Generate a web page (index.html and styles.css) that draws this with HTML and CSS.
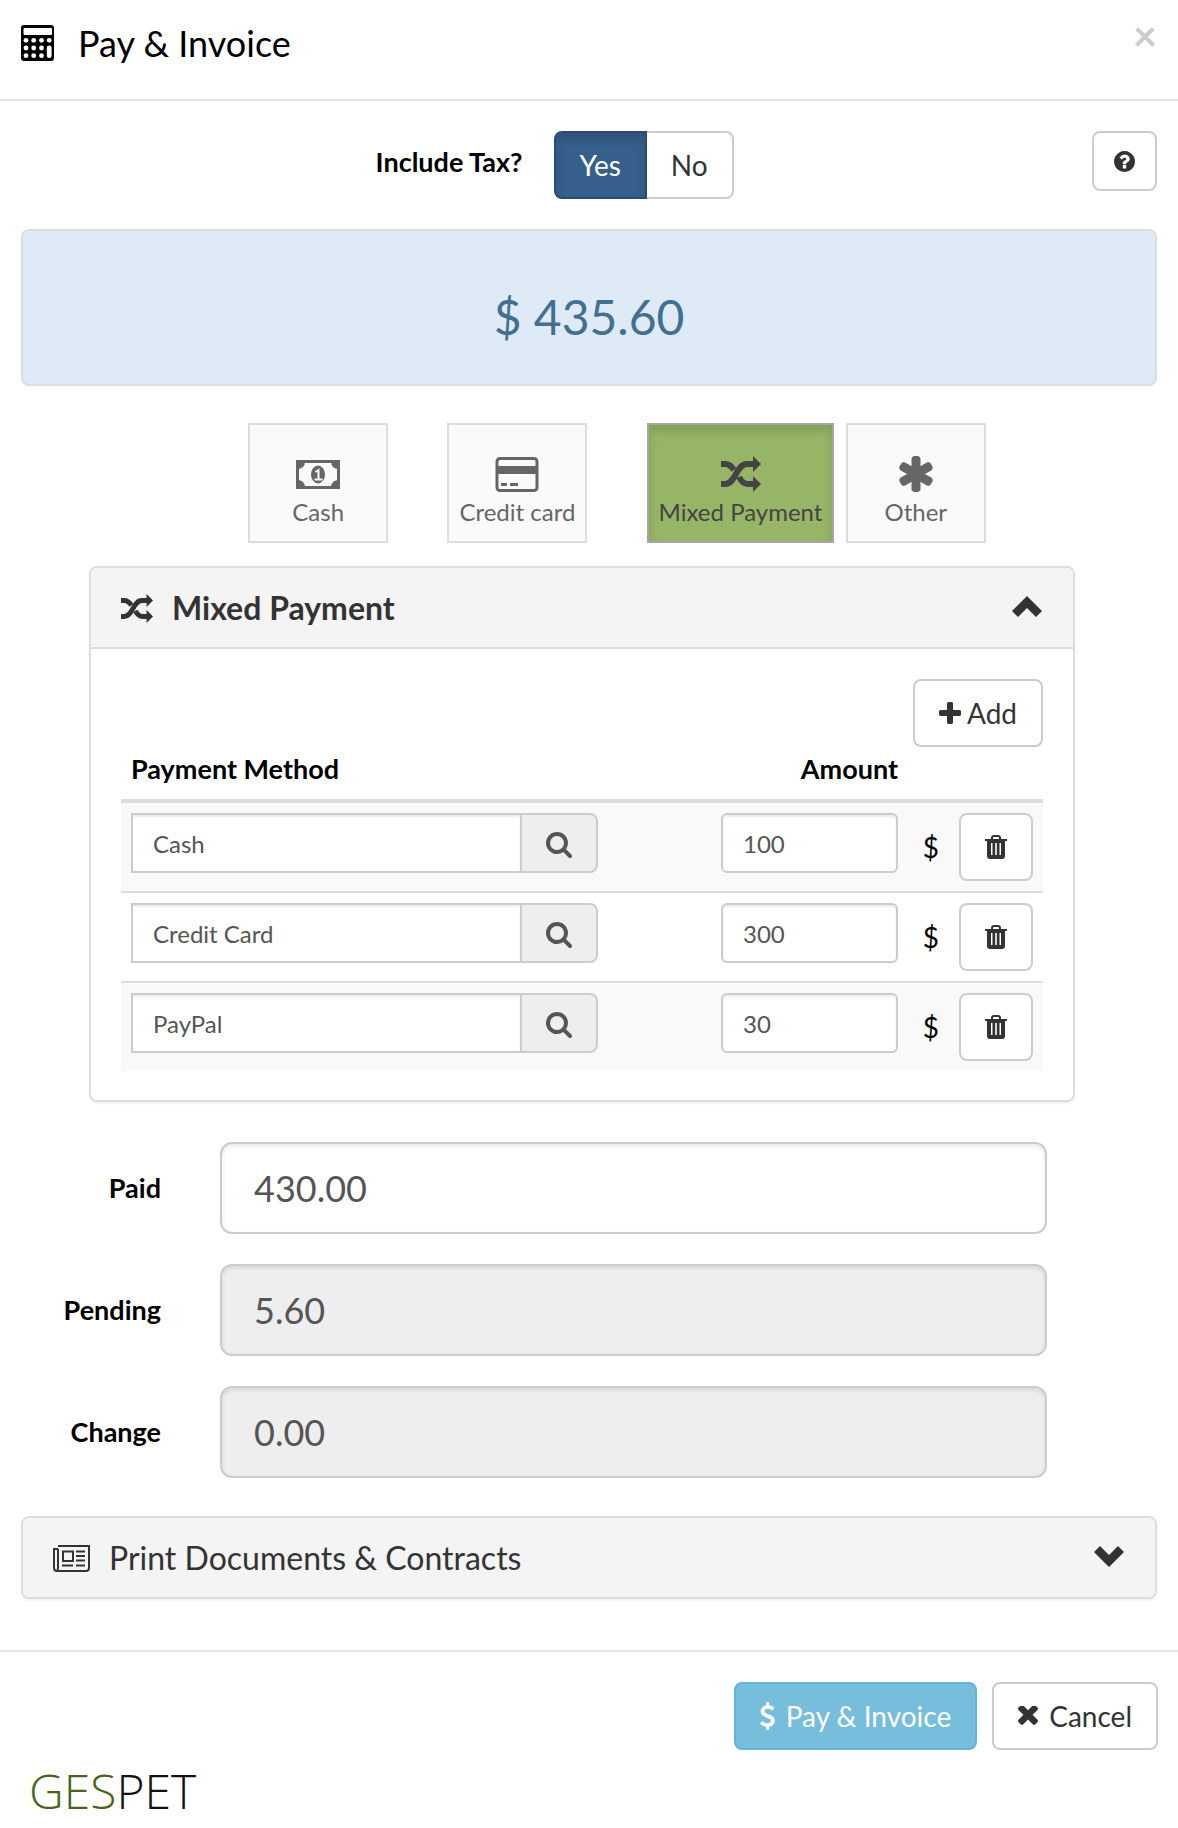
FILE: index.html
```html
<!DOCTYPE html>
<html lang="en">
<head>
    <meta charset="utf-8">
    <title>Pay &amp; Invoice</title>
    <link rel="stylesheet" href="styles.css">
</head>
<body>

<!-- Shared icons -->
<svg class="icon-defs" width="0" height="0" aria-hidden="true">
    <symbol id="icon-random" viewBox="0 0 40 36">
        <path d="M0 28h4c11 0 11-20 22-20h7" fill="none" stroke="currentColor" stroke-width="6"/>
        <path d="M0 8h4c5 0 7 3 9 6M18 21c2 4 4 7 9 7h6" fill="none" stroke="currentColor" stroke-width="6"/>
        <path d="M32 0l8 8-8 8zM32 20l8 8-8 8z" fill="currentColor"/>
    </symbol>
    <symbol id="icon-search" viewBox="0 0 1792 1792">
        <path fill="currentColor" d="M1216 832q0-185-131.500-316.500t-316.500-131.500-316.500 131.500-131.500 316.500 131.500 316.500 316.500 131.500 316.500-131.500 131.500-316.500zm512 832q0 52-38 90t-90 38q-54 0-90-38l-343-342q-179 124-399 124-143 0-273.500-55.500t-225-150-150-225-55.500-273.500 55.500-273.500 150-225 225-150 273.500-55.500 273.500 55.500 225 150 150 225 55.500 273.500q0 220-124 399l343 343q37 37 37 90z"/>
    </symbol>
    <symbol id="icon-trash" viewBox="0 0 22 24">
        <path d="M7 4V3q0-2 2-2h4q2 0 2 2v1" fill="none" stroke="currentColor" stroke-width="2"/>
        <path fill="currentColor" fill-rule="evenodd" d="M0 4h22v2h-2v15q0 3-3 3H5q-3 0-3-3V6H0zM6 8v12h1.500V8zM10.200 8v12h1.600V8zM14.500 8v12H16V8z"/>
    </symbol>
    <symbol id="icon-chevron" viewBox="0 0 30 21">
        <path fill="currentColor" d="M15 0l15 15-6 6-9-9-9 9-6-6z"/>
    </symbol>
</svg>

<header class="modal-header">
    <svg class="calc-icon" viewBox="0 0 33 36" aria-hidden="true">
        <rect width="33" height="36" rx="3"/>
        <g fill="#fff">
            <rect x="2.500" y="3" width="28.500" height="7" rx="1"/>
            <circle cx="5" cy="15.300" r="2.400"/><circle cx="12.700" cy="15.300" r="2.400"/><circle cx="20.500" cy="15.300" r="2.400"/><circle cx="28.200" cy="15.300" r="2.400"/>
            <circle cx="5" cy="23" r="2.400"/><circle cx="12.700" cy="23" r="2.400"/><circle cx="20.500" cy="23" r="2.400"/>
            <circle cx="5" cy="30.700" r="2.400"/><circle cx="12.700" cy="30.700" r="2.400"/><circle cx="20.500" cy="30.700" r="2.400"/>
            <rect x="25.800" y="20.600" width="4.800" height="12.500" rx="2.400"/>
        </g>
    </svg>
    <h1>Pay &amp; Invoice</h1>
    <button type="button" class="close" aria-label="Close">&times;</button>
</header>

<main class="modal-body">
    <div class="tax-row">
        <span class="label" id="taxLabel">Include Tax?</span>
        <div class="btn-group" role="group" aria-labelledby="taxLabel">
            <button type="button" class="btn active" aria-pressed="true">Yes</button>
            <button type="button" class="btn" aria-pressed="false">No</button>
        </div>
        <button type="button" class="btn help" aria-label="Help">
            <svg width="21" height="21" viewBox="128 128 1536 1536" aria-hidden="true"><path fill="currentColor" d="M1024 1376v-192q0-14-9-23t-23-9h-192q-14 0-23 9t-9 23v192q0 14 9 23t23 9h192q14 0 23-9t9-23zm256-672q0-88-55.500-163t-138.500-116-170-41q-243 0-371 213-15 24 8 42l132 100q7 6 19 6 16 0 25-12 53-68 86-92 34-24 86-24 48 0 85.500 26t37.500 59q0 38-20 61t-68 45q-63 28-115.500 86.500t-52.500 125.500v36q0 14 9 23t23 9h192q14 0 23-9t9-23q0-19 21.500-49.500t54.500-49.500q32-18 49-28.500t46-35 44.500-48 28-60.500 12.500-81zm384 192q0 209-103 385.500t-279.500 279.500-385.500 103-385.500-103-279.500-279.500-103-385.500 103-385.500 279.500-279.500 385.500-103 385.500 103 279.500 279.500 103 385.500z"/></svg>
        </button>
    </div>

    <div class="total">$ 435.60</div>

    <div class="methods">
        <div>
            <button type="button" class="method">
                <svg width="44" height="42" viewBox="0 0 44 42" aria-hidden="true">
                    <rect x="1.500" y="8.500" width="41" height="26" fill="none" stroke="currentColor" stroke-width="3"/>
                    <g fill="currentColor">
                        <path d="M1 8h8q0 8-8 8zM43 8h-8q0 8 8 8zM1 35h8q0-8-8-8zM43 35h-8q0-8 8-8z"/>
                        <ellipse cx="22" cy="21.500" rx="7" ry="9"/>
                    </g>
                    <path d="M19.500 19l3-2v9M18.500 26.500h8" fill="none" stroke="#fafafa" stroke-width="2"/>
                </svg>
                Cash
            </button>
        </div>
        <div>
            <button type="button" class="method">
                <svg width="44" height="42" viewBox="0 0 44 42" aria-hidden="true">
                    <rect x="2" y="5.500" width="40" height="32" rx="3" fill="none" stroke="currentColor" stroke-width="3"/>
                    <path fill="currentColor" d="M2 13h40v8H2zM6 30h6v3H6zM15 30h8v3h-8z"/>
                </svg>
                Credit card
            </button>
        </div>
        <div>
            <button type="button" class="method selected">
                <svg width="40" height="42" aria-hidden="true"><use href="#icon-random"/></svg>
                Mixed Payment
            </button>
        </div>
        <div>
            <button type="button" class="method">
                <svg width="40" height="42" viewBox="64 0 1664 1792" aria-hidden="true"><path fill="currentColor" d="M1546 1050q46 26 59.500 77.500t-12.500 97.500l-64 110q-26 46-77.500 59.500t-97.500-12.500l-266-153v307q0 52-38 90t-90 38h-128q-52 0-90-38t-38-90v-307l-266 153q-46 26-97.500 12.500t-77.500-59.500l-64-110q-26-46-12.500-97.500t59.500-77.500l266-154-266-154q-46-26-59.500-77.500t12.500-97.500l64-110q26-46 77.500-59.500t97.500 12.500l266 153v-307q0-52 38-90t90-38h128q52 0 90 38t38 90v307l266-153q46-26 97.500-12.500t77.500 59.500l64 110q26 46 12.500 97.500t-59.500 77.500l-266 154z"/></svg>
                Other
            </button>
        </div>
    </div>

    <section class="panel mixed">
        <div class="panel-heading">
            <svg width="32" height="29" aria-hidden="true"><use href="#icon-random"/></svg>
            <h2>Mixed Payment</h2>
            <button type="button" class="toggle" aria-label="Collapse"><svg width="30" height="21"><use href="#icon-chevron"/></svg></button>
        </div>
        <div class="panel-body">
            <div class="toolbar">
                <button type="button" class="btn add">
                    <svg width="22" height="22" viewBox="192 128 1408 1408" aria-hidden="true"><path fill="currentColor" d="M1600 736v192q0 40-28 68t-68 28h-416v416q0 40-28 68t-68 28h-192q-40 0-68-28t-28-68v-416h-416q-40 0-68-28t-28-68v-192q0-40 28-68t68-28h416v-416q0-40 28-68t68-28h192q40 0 68 28t28 68v416h416q40 0 68 28t28 68z"/></svg>
                    Add
                </button>
            </div>
            <table>
                <thead>
                    <tr>
                        <th class="col-method">Payment Method</th>
                        <th class="col-amount">Amount</th>
                        <th class="col-currency"></th>
                        <th class="col-delete"></th>
                    </tr>
                </thead>
                <tbody>
                    <tr>
                        <td>
                            <div class="input-group">
                                <input type="text" value="Cash" aria-label="Payment Method">
                                <button type="button" aria-label="Search"><svg width="28" height="28"><use href="#icon-search"/></svg></button>
                            </div>
                        </td>
                        <td class="col-amount"><input type="text" value="100" aria-label="Amount"></td>
                        <td class="col-currency">$</td>
                        <td><button type="button" class="btn" aria-label="Delete"><svg width="22" height="24"><use href="#icon-trash"/></svg></button></td>
                    </tr>
                    <tr>
                        <td>
                            <div class="input-group">
                                <input type="text" value="Credit Card" aria-label="Payment Method">
                                <button type="button" aria-label="Search"><svg width="28" height="28"><use href="#icon-search"/></svg></button>
                            </div>
                        </td>
                        <td class="col-amount"><input type="text" value="300" aria-label="Amount"></td>
                        <td class="col-currency">$</td>
                        <td><button type="button" class="btn" aria-label="Delete"><svg width="22" height="24"><use href="#icon-trash"/></svg></button></td>
                    </tr>
                    <tr>
                        <td>
                            <div class="input-group">
                                <input type="text" value="PayPal" aria-label="Payment Method">
                                <button type="button" aria-label="Search"><svg width="28" height="28"><use href="#icon-search"/></svg></button>
                            </div>
                        </td>
                        <td class="col-amount"><input type="text" value="30" aria-label="Amount"></td>
                        <td class="col-currency">$</td>
                        <td><button type="button" class="btn" aria-label="Delete"><svg width="22" height="24"><use href="#icon-trash"/></svg></button></td>
                    </tr>
                </tbody>
            </table>
        </div>
    </section>

    <div class="fields">
        <label for="paid">Paid</label>
        <input type="text" id="paid" value="430.00">
        <label for="pending">Pending</label>
        <input type="text" id="pending" value="5.60" readonly>
        <label for="change">Change</label>
        <input type="text" id="change" value="0.00" readonly>
    </div>

    <section class="panel print">
        <div class="panel-heading">
            <svg width="37" height="27" viewBox="0 0 37 27" aria-hidden="true">
                <path d="M5 1h31v22q0 3-3 3H4q-3 0-3-3V4h4M5 4v19q0 2-1 3" fill="none" stroke="currentColor" stroke-width="2"/>
                <rect x="10" y="6.500" width="10" height="9.500" fill="none" stroke="currentColor" stroke-width="2"/>
                <path d="M23 6.500h9M23 11h9M23 15.500h9M9 20.500h11M23 20.500h9" stroke="currentColor" stroke-width="2"/>
            </svg>
            <h2>Print Documents &amp; Contracts</h2>
            <button type="button" class="toggle down" aria-label="Expand"><svg width="30" height="21"><use href="#icon-chevron"/></svg></button>
        </div>
    </section>
</main>

<footer class="modal-footer">
    <div class="actions">
        <button type="button" class="btn btn-info">
            <svg width="15" height="28" viewBox="430 0 932 1792" aria-hidden="true"><path fill="currentColor" d="M1362 1185q0 153-99.500 263.500t-258.500 136.500v175q0 14-9 23t-23 9h-135q-13 0-22.500-9.500t-9.500-22.500v-175q-66-9-127.500-31t-101.500-44.500-74-48-46.500-37.500-17.500-18q-17-21-2-41l103-135q7-10 23-12 15-2 24 9l2 2q113 99 243 125 37 8 74 8 81 0 142.500-43t61.500-122q0-28-15-53t-33.500-42-58.500-37.500-66-32-80-32.500q-39-16-61.500-25t-61.500-26.500-62.500-31-56.500-35.500-53.500-42.500-43.500-49-35.500-58-21-66.500-8.500-78q0-138 98-242t255-134v-180q0-13 9.500-22.500t22.500-9.500h135q14 0 23 9t9 23v176q57 6 110.500 23t87 33.500 63.500 37.500 39 29 15 14q17 18 5 38l-81 146q-8 15-23 16-14 3-27-7-3-3-14.500-12t-39-26.500-58.500-32-74.500-26-85.500-11.500q-95 0-155 43t-60 111q0 26 8.500 48t29.500 41.500 39.500 33 56 31 60.500 27 70 27.500q53 20 81 31.500t76 35 75.500 42.500 62 50 53 63.500 31.500 76.500 13 94z"/></svg>
            Pay &amp; Invoice
        </button>
        <button type="button" class="btn">
            <svg width="20" height="20" viewBox="302 434 1188 1188" aria-hidden="true"><path fill="currentColor" d="M1490 1322q0 40-28 68l-136 136q-28 28-68 28t-68-28l-294-294-294 294q-28 28-68 28t-68-28l-136-136q-28-28-28-68t28-68l294-294-294-294q-28-28-28-68t28-68l136-136q28-28 68-28t68 28l294 294 294-294q28-28 68-28t68 28l136 136q28 28 28 68t-28 68l-294 294 294 294q28 28 28 68z"/></svg>
            Cancel
        </button>
    </div>
    <div class="logo"><span>GES</span>PET</div>
</footer>

</body>
</html>
```

FILE: styles.css
```css
* {
    box-sizing: border-box;
}
body {
    margin: 0;
    background: #fff;
    color: #000;
    font-family: Lato, sans-serif;
    font-size: 28px;
    line-height: 40px;
}
button, input {
    font: inherit;
    margin: 0;
}
button {
    cursor: pointer;
}
svg {
    display: block;
    flex: none;
}
.icon-defs {
    position: absolute;
}

/* Header */
.modal-header {
    display: flex;
    align-items: center;
    padding: 19px 21px 32px;
    border-bottom: 2px solid #e5e5e5;
}
.calc-icon {
    width: 33px;
    height: 36px;
}
h1 {
    margin: 0 auto 0 24px;
    font-size: 36px;
    font-weight: 400;
    line-height: 48px;
}
.close {
    padding: 0;
    border: 0;
    background: none;
    color: #ccc;
    font-size: 42px;
    font-weight: 700;
    line-height: 32px;
    align-self: flex-start;
}

.modal-body {
    padding: 30px 21px 51px;
}

/* Buttons */
.btn {
    display: inline-flex;
    align-items: center;
    justify-content: center;
    gap: 11px;
    padding: 12px 24px;
    min-height: 68px;
    border: 2px solid #ccc;
    border-radius: 8px;
    background: #fff;
    color: #333;
}
.btn-group {
    display: flex;
}
.btn-group .btn:first-child {
    border-radius: 8px 0 0 8px;
}
.btn-group .btn:last-child {
    border-left: 0;
    border-radius: 0 8px 8px 0;
}
.btn.active {
    background: #375f8c;
    border-color: #2b4d74;
    color: #fff;
    box-shadow: inset 0 6px 10px rgba(0, 0, 0, 0.125);
}
.btn-info {
    background: #77bddc;
    border-color: #64b4d8;
    color: #fff;
}
.add {
    gap: 6px;
}

/* Tax switch */
.tax-row {
    display: flex;
    align-items: flex-start;
    padding-left: 3px;
}
.label {
    width: 44%;
    margin-right: 31px;
    padding-top: 11px;
    font-size: 27px;
    font-weight: 700;
    text-align: right;
}
.help {
    margin-left: auto;
    padding: 0 20px;
    min-height: 60px;
}

.total {
    margin-top: 30px;
    padding: 59px 20px 41px;
    border: 2px solid #ddd;
    border-radius: 8px;
    background: #deebf6;
    color: #44708f;
    font-size: 48px;
    line-height: 53px;
    text-align: center;
}

/* Payment methods */
.methods {
    display: grid;
    grid-template-columns: repeat(4, 1fr);
    margin: 37px 112px 0 20%;
}
.method {
    display: flex;
    flex-direction: column;
    align-items: center;
    min-width: 140px;
    padding: 28px 10px 12px;
    border: 2px solid #ddd;
    background: #fafafa;
    color: #666;
    font-size: 24px;
    line-height: 34px;
    white-space: nowrap;
}
.method.selected {
    background: #96b566;
    border-color: #a6a6a6;
    color: #444;
    box-shadow: inset 0 6px 10px rgba(0, 0, 0, 0.125);
}

/* Panels */
.panel {
    border: 2px solid #ddd;
    border-radius: 8px;
    box-shadow: 0 2px 2px rgba(0, 0, 0, 0.05);
}
.mixed {
    margin: 23px 82px 0 68px;
}
.print {
    margin-top: 38px;
}
.panel-heading {
    display: flex;
    align-items: center;
    padding: 21px 30px 20px;
    border-radius: 6px;
    background: #f4f4f4;
    color: #333;
}
.mixed .panel-heading {
    border-bottom: 2px solid #ddd;
    border-radius: 6px 6px 0 0;
}
h2 {
    margin: 0 auto 0 19px;
    font-size: 32px;
    font-weight: 400;
    line-height: 38px;
}
.mixed h2 {
    font-weight: 700;
}
.toggle {
    padding: 0 1px 4px 0;
    border: 0;
    background: none;
    color: inherit;
}
.toggle.down svg {
    transform: rotate(180deg);
}
.panel-body {
    padding: 30px 30px 29px;
}
.toolbar {
    display: flex;
    justify-content: flex-end;
}

/* Payment lines */
table {
    width: 100%;
    border-spacing: 0;
    table-layout: fixed;
}
th {
    padding: 2px 10px 10px;
    border-bottom: 4px solid #ddd;
    font-size: 27px;
    text-align: left;
}
td {
    padding: 10px;
    vertical-align: top;
}
tr + tr td {
    border-top: 2px solid #ddd;
}
tbody tr:nth-child(odd) {
    background: #f9f9f9;
}
th.col-method {
    width: 487px;
}
.col-amount {
    text-align: right;
}
.col-currency {
    width: 41px;
    text-align: right;
    vertical-align: middle;
}
th.col-delete {
    width: 94px;
}
td .btn {
    display: flex;
}
td input {
    display: block;
    width: 100%;
    height: 60px;
    padding: 12px 20px;
    border: 2px solid #ccc;
    background: #fff;
    color: #555;
    font-size: 24px;
    box-shadow: inset 0 2px 2px rgba(0, 0, 0, 0.075);
}
td.col-amount input {
    width: 177px;
    margin-left: auto;
    border-radius: 6px;
}
.input-group {
    display: flex;
}
.input-group button {
    flex: none;
    padding: 2px 23px 0;
    border: 2px solid #ccc;
    border-left: 0;
    border-radius: 0 8px 8px 0;
    background: #eee;
    color: #555;
}

/* Totals */
.fields {
    display: grid;
    grid-template-columns: 140px 1fr;
    gap: 30px 59px;
    margin: 40px 110px 0 0;
    align-items: center;
}
.fields label {
    font-size: 27px;
    font-weight: 700;
    text-align: right;
}
.fields input {
    width: 100%;
    height: 92px;
    padding: 20px 32px;
    border: 2px solid #ccc;
    border-radius: 12px;
    background: #fff;
    color: #555;
    font-size: 36px;
    box-shadow: inset 0 2px 4px rgba(0, 0, 0, 0.1);
}
.fields input[readonly] {
    background: #eee;
}

/* Footer */
.modal-footer {
    padding: 30px 20px 8px;
    border-top: 2px solid #e5e5e5;
}
.actions {
    display: flex;
    justify-content: flex-end;
    gap: 15px;
}
.logo {
    margin: 11px 9px 0;
    color: #111;
    font-family: "Open Sans", sans-serif;
    font-size: 48px;
    font-weight: 300;
    line-height: 60px;
}
.logo span {
    color: #4a6320;
}
```
